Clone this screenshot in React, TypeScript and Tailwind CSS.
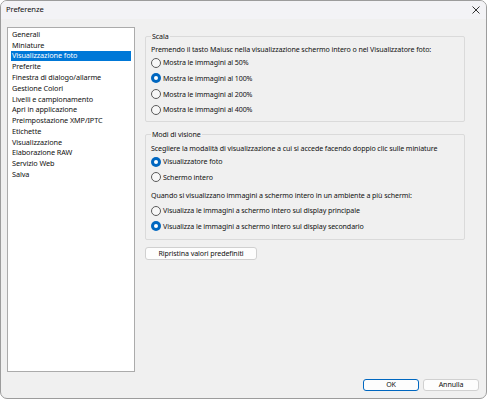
import React from "react";

const listItems = [
  "Generali",
  "Miniature",
  "Visualizzazione foto",
  "Preferite",
  "Finestra di dialogo/allarme",
  "Gestione Colori",
  "Livelli e campionamento",
  "Apri in applicazione",
  "Preimpostazione XMP/IPTC",
  "Etichette",
  "Visualizzazione",
  "Elaborazione RAW",
  "Servizio Web",
  "Salva",
];

function Radio({ checked, label }: { checked?: boolean; label: string }) {
  return (
    <div className="flex h-[15.6px] items-center whitespace-nowrap">
      {checked ? (
        <span className="flex h-[10px] w-[10px] shrink-0 items-center justify-center rounded-full bg-[#0067c0]">
          <span className="h-[4px] w-[4px] rounded-full bg-white" />
        </span>
      ) : (
        <span className="h-[10px] w-[10px] shrink-0 rounded-full border border-[#5a5a5a] bg-[#f7f7f7]" />
      )}
      <span className="ml-[2px]">{label}</span>
    </div>
  );
}

function Group({
  title,
  children,
  className,
}: {
  title: string;
  children: React.ReactNode;
  className?: string;
}) {
  return (
    <div
      className={
        "relative w-[320px] rounded-[2px] border border-[#dadada] pl-[5px] pr-[2px] " +
        (className ?? "")
      }
    >
      <span className="absolute left-[5px] top-[-7px] bg-[#f0f0f0] px-[1px] leading-[12px]">
        {title}
      </span>
      {children}
    </div>
  );
}

export default function App() {
  return (
    <div
      className="flex h-[399px] w-[487px] flex-col overflow-hidden rounded-[7px] border border-[#9c9c9c] bg-[#f0f0f0] text-[7.1px] tracking-[-0.1px] text-[#111111]"
      style={{ fontFamily: '"Noto Sans", "Open Sans", sans-serif' }}
    >
      <div className="flex h-[18px] shrink-0 items-center justify-between bg-[#f3f3f6] pl-[5px] pr-[5px]">
        <span className="text-[7.6px]">Preferenze</span>
        <svg width="8" height="8" viewBox="0 0 8 8" className="mr-[1px]">
          <path d="M0.5 0.5 L7.5 7.5 M7.5 0.5 L0.5 7.5" stroke="#333" strokeWidth="1" />
        </svg>
      </div>
      <div className="flex flex-1 flex-col px-[6px] pt-[8px]">
        <div className="flex h-[345px]">
          <div className="h-full w-[128px] border border-[#ababab] bg-white px-[3px] pt-[1px] text-[7.3px]">
            {listItems.map((it, i) => (
              <div
                key={it}
                className={
                  "flex h-[10.77px] items-center whitespace-nowrap pl-[1px] " +
                  (i === 2 ? "bg-[#0078d7] text-white" : "")
                }
              >
                {it}
              </div>
            ))}
          </div>
          <div className="ml-[10px] flex flex-col pt-[9px]">
            <Group title="Scala" className="pt-[6px] pb-[4px]">
              <div className="flex h-[12px] items-center whitespace-nowrap">
                Premendo il tasto Maiusc nella visualizzazione schermo intero o nel Visualizzatore foto:
              </div>
              <Radio label="Mostra le immagini al 50%" />
              <Radio checked label="Mostra le immagini al 100%" />
              <Radio label="Mostra le immagini al 200%" />
              <Radio label="Mostra le immagini al 400%" />
            </Group>
            <Group title="Modi di visione" className="mt-[11.5px] pt-[7px] pb-[4.5px]">
              <div className="flex h-[12px] items-center whitespace-nowrap">
                Scegliere la modalità di visualizzazione a cui si accede facendo doppio clic sulle miniature
              </div>
              <Radio checked label="Visualizzatore foto" />
              <Radio label="Schermo intero" />
              <div className="mt-[1.8px] flex h-[16px] items-center whitespace-nowrap">
                Quando si visualizzano immagini a schermo intero in un ambiente a più schermi:
              </div>
              <Radio label="Visualizza le immagini a schermo intero sul display principale" />
              <Radio checked label="Visualizza le immagini a schermo intero sul display secondario" />
            </Group>
            <div className="mt-[7.5px]">
              <button className="flex h-[13px] w-[112px] items-center justify-center rounded-[3px] border border-[#d0d0d0] bg-[#fdfdfd] leading-none">
                Ripristina valori predefiniti
              </button>
            </div>
          </div>
        </div>
        <div className="mt-[7px] flex justify-end gap-[4px] pr-[1px]">
          <button className="flex h-[12px] w-[56px] items-center justify-center rounded-[3px] border border-[#0067c0] bg-[#fdfdfd] leading-none">
            OK
          </button>
          <button className="flex h-[12px] w-[56px] items-center justify-center rounded-[3px] border border-[#d0d0d0] bg-[#fdfdfd] leading-none">
            Annulla
          </button>
        </div>
      </div>
    </div>
  );
}
